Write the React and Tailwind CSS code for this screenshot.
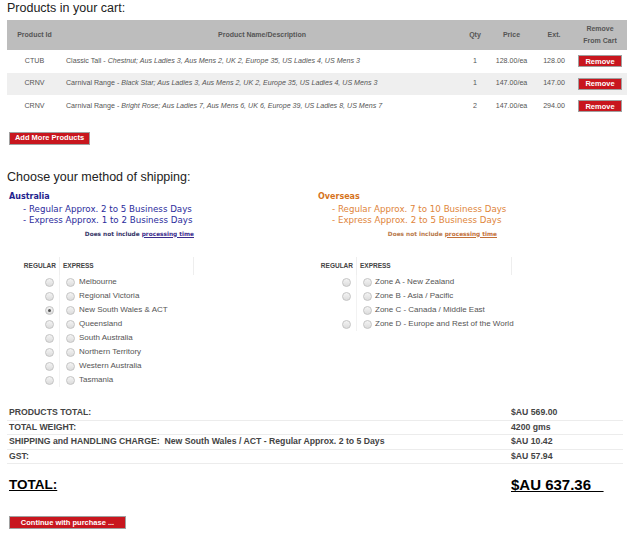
import React from "react";

const rows = [
  { id: "CTUB", name: "Classic Tall", color: "Chestnut", rest: "; Aus Ladies 3, Aus Mens 2, UK 2, Europe 35, US Ladies 4, US Mens 3", qty: 1, price: "128.00/ea", ext: "128.00" },
  { id: "CRNV", name: "Carnival Range", color: "Black Star", rest: "; Aus Ladies 3, Aus Mens 2, UK 2, Europe 35, US Ladies 4, US Mens 3", qty: 1, price: "147.00/ea", ext: "147.00" },
  { id: "CRNV", name: "Carnival Range", color: "Bright Rose", rest: "; Aus Ladies 7, Aus Mens 6, UK 6, Europe 39, US Ladies 8, US Mens 7", qty: 2, price: "147.00/ea", ext: "294.00" },
];

const au = [
  ["Melbourne", true],
  ["Regional Victoria", true],
  ["New South Wales & ACT", true, true],
  ["Queensland", true],
  ["South Australia", true],
  ["Northern Territory", true],
  ["Western Australia", true],
  ["Tasmania", true],
];
const os = [
  ["Zone A - New Zealand", true],
  ["Zone B - Asia / Pacific", true],
  ["Zone C - Canada / Middle East", false],
  ["Zone D - Europe and Rest of the World", true],
];

function Radio({ checked }) {
  return (
    <span className="relative inline-block w-[9px] h-[9px] rounded-full border border-[#c4c4c4] bg-[linear-gradient(#f4f4f4,#dcdcdc)]">
      {checked && <span className="absolute left-[2px] top-[2px] w-[3px] h-[3px] rounded-full bg-[#555]" />}
    </span>
  );
}

function RedButton({ children, className = "" }) {
  return (
    <span className={"flex items-center justify-center bg-[#c8161e] border border-[#a0a0a0] text-white font-bold text-[7.5px] leading-none " + className}>
      {children}
    </span>
  );
}

function RadioBlock({ items, pl, leftW, rightW, gap }) {
  return (
    <div className={"flex flex-col font-['Liberation_Sans',Arial,sans-serif] " + pl}>
      <div className="flex h-[18px] items-center">
        <div className={"text-right pr-[3px] text-[6.5px] font-bold text-[#444] " + leftW}>REGULAR</div>
        <div className={"h-full border-l border-[#eee] border-r pl-[3px] flex items-center text-[6.5px] font-bold text-[#444] " + rightW}>EXPRESS</div>
      </div>
      {items.map(([label, reg, checked]) => (
        <div key={label} className="flex h-[14px] items-center">
          <div className={"flex justify-end pr-[5px] " + leftW}>{reg ? <Radio checked={checked} /> : null}</div>
          <div className={"h-full border-l border-[#f2f2f2] pl-[6px] flex items-center text-[8px] text-[#555] whitespace-nowrap " + gap}>
            <Radio />
            <span>{label}</span>
          </div>
        </div>
      ))}
    </div>
  );
}

export default function App() {
  return (
    <div className="w-[630px] h-[541px] bg-white font-['Liberation_Sans',Arial,sans-serif] text-[#333] overflow-hidden">
      <div className="pl-[7px] pt-[1px] text-[12.5px] leading-[15px] text-[#222]">Products in your cart:</div>
      <table className="ml-[7px] mt-[4px] w-[620px] table-fixed border-collapse text-[7.1px] text-[#555]">
        <colgroup>
          <col className="w-[55px]" />
          <col className="w-[400px]" />
          <col className="w-[26px]" />
          <col className="w-[47px]" />
          <col className="w-[38px]" />
          <col className="w-[54px]" />
        </colgroup>
        <thead>
          <tr className="bg-[#bdbdbd] h-[30px] font-bold text-[7px] text-[#555]">
            <th className="font-bold">Product Id</th>
            <th className="font-bold">Product Name/Description</th>
            <th className="font-bold">Qty</th>
            <th className="font-bold">Price</th>
            <th className="font-bold">Ext.</th>
            <th className="font-bold leading-[12px]">Remove<br />From Cart</th>
          </tr>
        </thead>
        <tbody>
          {rows.map((r, i) => (
            <tr key={i} className={"h-[22.5px] " + (i === 1 ? "bg-[#efefef]" : "bg-white")}>
              <td className="text-center">{r.id}</td>
              <td className="pl-[4px] whitespace-nowrap">
                {r.name} - <i>{r.color}{r.rest}</i>
              </td>
              <td className="text-center">{r.qty}</td>
              <td className="text-center">{r.price}</td>
              <td className="text-center">{r.ext}</td>
              <td>
                <div className="flex justify-center">
                  <RedButton className="w-[44px] h-[12px] text-[7.5px]">Remove</RedButton>
                </div>
              </td>
            </tr>
          ))}
        </tbody>
      </table>

      <div className="flex pl-[9px] mt-[14px]">
        <RedButton className="w-[81px] h-[13px]">Add More Products</RedButton>
      </div>

      <div className="pl-[7px] mt-[25px] text-[12.5px] leading-[15px] text-[#222]">Choose your method of shipping:</div>

      <div className="flex mt-[6px] font-['DejaVu_Sans',Verdana,sans-serif]">
        <div className="w-[318px] pl-[9px] shrink-0">
          <div className="text-[8px] font-bold text-[#1e1e8e] leading-[12px]">Australia</div>
          <div className="pl-[14px] text-[8.7px] text-[#2b2b9c] leading-[11.5px] mt-[1px]">
            <div>- Regular Approx. 2 to 5 Business Days</div>
            <div>- Express Approx. 1 to 2 Business Days</div>
          </div>
          <div className="w-[185px] text-right text-[5.8px] font-bold text-[#333366] mt-[3px]">
            Does not include <span className="underline text-[#3b2b8c]">processing time</span>
          </div>
        </div>
        <div>
          <div className="text-[8px] font-bold text-[#d6731d] leading-[12px]">Overseas</div>
          <div className="pl-[14px] text-[8.7px] text-[#e0853a] leading-[11.5px] mt-[1px]">
            <div>- Regular Approx. 7 to 10 Business Days</div>
            <div>- Express Approx. 2 to 5 Business Days</div>
          </div>
          <div className="w-[179px] text-right text-[5.8px] font-bold text-[#b8784a] mt-[3px]">
            Does not include <span className="underline text-[#c2703a]">processing time</span>
          </div>
        </div>
      </div>

      <div className="flex mt-[19px]">
        <div className="w-[303px] shrink-0">
          <RadioBlock items={au} pl="pl-[20px]" leftW="w-[39px]" rightW="w-[135px]" gap="gap-[4px]" />
        </div>
        <div>
          <RadioBlock items={os} pl="pl-[14px]" leftW="w-[39px]" rightW="w-[156px]" gap="gap-[3px]" />
        </div>
      </div>

      <div className="mx-[7px] mt-[19px] text-[8.7px] font-bold text-[#444]">
        {[
          ["PRODUCTS TOTAL:", "$AU 569.00"],
          ["TOTAL WEIGHT:", "4200 gms"],
          ["SHIPPING and HANDLING CHARGE:\u00a0 New South Wales / ACT - Regular Approx. 2 to 5 Days", "$AU 10.42"],
          ["GST:", "$AU 57.94"],
        ].map(([l, v]) => (
          <div key={l} className="flex h-[14.5px] items-center border-b border-[#ececec]">
            <div className="w-[504px] pl-[2px] shrink-0">{l}</div>
            <div>{v}</div>
          </div>
        ))}
        <div className="flex mt-[12px] text-black leading-[17px] items-end">
          <div className="w-[504px] pl-[2px] underline text-[13.5px] shrink-0">TOTAL:</div>
          <div className="underline whitespace-pre text-[15px]">$AU 637.36   </div>
        </div>
      </div>

      <div className="flex pl-[9px] mt-[23px]">
        <RedButton className="w-[117px] h-[13px]">Continue with purchase ...</RedButton>
      </div>
    </div>
  );
}
